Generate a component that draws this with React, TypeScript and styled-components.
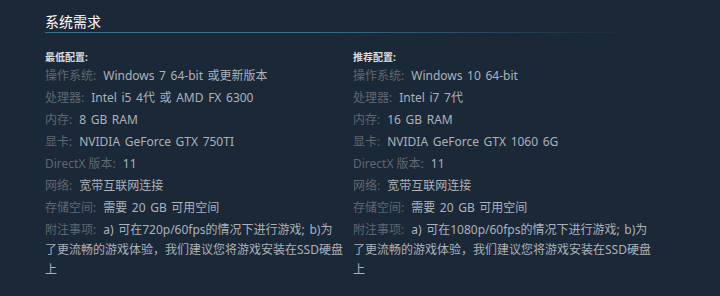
import styled, { createGlobalStyle } from "styled-components";

const GlobalStyle = createGlobalStyle`
  body {
    margin: 0;
    background: #1b2838;
  }
`;

const Page = styled.div`
  width: 720px;
  height: 296px;
  box-sizing: border-box;
  padding: 12px 0 0 45px;
  background: #1b2838;
  font-family: "Noto Sans", "Noto Sans CJK SC", Arial, sans-serif;
  overflow: hidden;
`;

const Title = styled.h2`
  margin: 0;
  width: 588px;
  padding-bottom: 2px;
  font-size: 14px;
  line-height: 20px;
  font-weight: normal;
  color: #ffffff;

  &::after {
    content: "";
    display: block;
    height: 1px;
    background: linear-gradient(to right, #3b6e8c 0%, #3b6e8c 45%, rgba(59, 110, 140, 0) 100%);
  }
`;

const Columns = styled.div`
  display: flex;
  gap: 9px;
  margin-top: 14px;
`;

const Column = styled.div`
  width: 299px;
`;

const ColHead = styled.div`
  font-size: 10px;
  font-weight: bold;
  line-height: 17px;
  color: #dcdedf;
`;

const List = styled.ul`
  list-style: none;
  margin: 0;
  padding: 0;
`;

const Item = styled.li`
  font-size: 12px;
  line-height: 20px;
  color: #acb2b8;
  word-spacing: 1.5px;
  margin-bottom: 2px;
`;

const Label = styled.span`
  color: #5f6770;
  word-spacing: 0;
  margin-right: 7px;
`;

type Spec = [string, string];

const minimum: Spec[] = [
  ["操作系统:", "Windows 7 64-bit 或更新版本"],
  ["处理器:", "Intel i5 4代 或 AMD FX 6300"],
  ["内存:", "8 GB RAM"],
  ["显卡:", "NVIDIA GeForce GTX 750TI"],
  ["DirectX 版本:", "11"],
  ["网络:", "宽带互联网连接"],
  ["存储空间:", "需要 20 GB 可用空间"],
  ["附注事项:", "a) 可在720p/60fps的情况下进行游戏; b)为了更流畅的游戏体验，我们建议您将游戏安装在SSD硬盘上"],
];

const recommended: Spec[] = [
  ["操作系统:", "Windows 10 64-bit"],
  ["处理器:", "Intel i7 7代"],
  ["内存:", "16 GB RAM"],
  ["显卡:", "NVIDIA GeForce GTX 1060 6G"],
  ["DirectX 版本:", "11"],
  ["网络:", "宽带互联网连接"],
  ["存储空间:", "需要 20 GB 可用空间"],
  ["附注事项:", "a) 可在1080p/60fps的情况下进行游戏; b)为了更流畅的游戏体验，我们建议您将游戏安装在SSD硬盘上"],
];

const ReqColumn = ({ title, specs }: { title: string; specs: Spec[] }) => (
  <Column>
    <ColHead>{title}</ColHead>
    <List>
      {specs.map(([label, value]) => (
        <Item key={label}>
          <Label>{label}</Label>
          {value}
        </Item>
      ))}
    </List>
  </Column>
);

export default function App() {
  return (
    <Page>
      <GlobalStyle />
      <Title>系统需求</Title>
      <Columns>
        <ReqColumn title="最低配置:" specs={minimum} />
        <ReqColumn title="推荐配置:" specs={recommended} />
      </Columns>
    </Page>
  );
}
